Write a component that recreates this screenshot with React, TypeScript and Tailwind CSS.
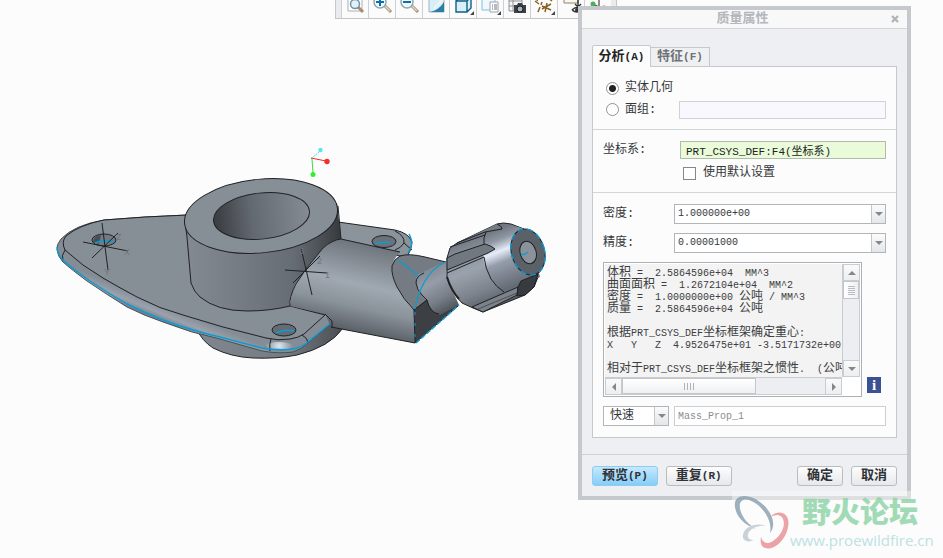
import { Fragment, useState } from "react";
import type { ReactNode } from "react";

const CJK = /([\u2e80-\u9fff]+)/;

/** Terminal-style text: half-width Latin cells next to full-width Han cells. */
function Cells({ children, bold = false }: { children: string; bold?: boolean }) {
  return (
    <>
      {children.split(CJK).map((run, i) =>
        CJK.test(run) ? (
          <span key={i} className={bold ? "text-[13px]" : "text-[12px]"}>
            {run}
          </span>
        ) : (
          <span key={i} className={bold ? "text-[11px]" : "text-[10px] leading-[10px]"}>
            {run}
          </span>
        ),
      )}
    </>
  );
}

function Triangle({ dir }: { dir: "up" | "down" | "left" | "right" }) {
  const points = {
    up: "0,6 4,2 8,6",
    down: "0,2 8,2 4,6",
    left: "6,0 6,8 2,4",
    right: "2,0 2,8 6,4",
  }[dir];
  return (
    <svg width="8" height="8" viewBox="0 0 8 8" aria-hidden="true">
      <polygon points={points} fill="#85888b" />
    </svg>
  );
}

function Combo({
  id,
  label,
  options,
  className = "",
  textClass,
}: {
  id: string;
  label: string;
  options: string[];
  className?: string;
  textClass: string;
}) {
  return (
    <div className={`grid border border-[#b3b6b9] bg-white ${className}`}>
      <select
        id={id}
        aria-label={label}
        className={`col-start-1 row-start-1 h-[18px] w-full appearance-none bg-transparent leading-[18px] outline-none ${textClass}`}
      >
        {options.map((o) => (
          <option key={o}>{o}</option>
        ))}
      </select>
      <span className="pointer-events-none col-start-1 row-start-1 flex w-[14px] items-center justify-center justify-self-end border-l border-[#c3c7ca] bg-linear-to-b from-[#fbfbfb] to-[#e4e6e9]">
        <Triangle dir="down" />
      </span>
    </div>
  );
}

function Magnifier({ sign }: { sign: "+" | "-" }) {
  return (
    <>
      <path d="M13 12l7 7" stroke="#a98c6a" strokeWidth="3" />
      <path d="M13 12l6 6" stroke="#d5dade" strokeWidth="1.4" />
      <circle cx="9" cy="9" r="6" fill="#eef8fd" stroke="#8fa3af" strokeWidth="1.4" />
      <path d={sign === "+" ? "M9 5v8M5 9h8" : "M5 9h8"} stroke="#0d6fa5" strokeWidth="2" />
    </>
  );
}

const More = () => <path d="M22 18v4h-4z" fill="#444" />;

const tools: { name: string; art: ReactNode }[] = [
  {
    name: "重新调整",
    art: (
      <>
        <path d="M4 3h14v15H4z" fill="#fff" stroke="#a5b1b9" />
        <path d="M14 14l5 5" stroke="#a98c6a" strokeWidth="3" />
        <circle cx="11" cy="11" r="4.500" fill="#dff1fb" stroke="#78909f" strokeWidth="1.500" />
      </>
    ),
  },
  { name: "放大", art: <Magnifier sign="+" /> },
  { name: "缩小", art: <Magnifier sign="-" /> },
  {
    name: "重画",
    art: (
      <>
        <path d="M4 4h15v15H4z" fill="#d8effa" stroke="#9db3bf" />
        <path d="M5 19Q14 17 19 9v10z" fill="#2b7fa3" />
        <path d="M9 16L18 6" stroke="#eef4f6" strokeWidth="2.500" />
      </>
    ),
  },
  {
    name: "显示样式",
    art: (
      <>
        <path d="M4 8h11v11H4zM4 8l4-4h11v11l-4 4M15 8l4-4" fill="#d8eff9" stroke="#125f83" strokeWidth="1.400" />
        <More />
      </>
    ),
  },
  {
    name: "已保存方向",
    art: (
      <>
        <path d="M3 3h13v14H3z" fill="#eef8fd" stroke="#7fc2df" />
        <path d="M11 9h8v10h-8z" fill="#fff" stroke="#9aa3a9" />
        <path d="M13 12h1M15 12h3M13 14h1M15 14h3M13 16h1M15 16h3" stroke="#6c777e" />
        <More />
      </>
    ),
  },
  {
    name: "视图管理器",
    art: (
      <>
        <path d="M3 3h13v15H3zM3 8h13M3 13h13M7 3v15" fill="#f5f5f5" stroke="#8f9498" />
        <path d="M8 12h3l1-2h4l1 2h3v8H8z" fill="#3d4145" />
        <circle cx="14" cy="16" r="3" fill="#a9b3ba" stroke="#17191b" />
      </>
    ),
  },
  {
    name: "基准显示",
    art: (
      <>
        <path
          d="M2 8l4 3M5 5l-1 3M5 19l2-5M8 12l1-3M14 10l-2 9M9 13l9 4M18 11l-9 5M14 4l5 4"
          stroke="#876322"
          strokeWidth="1.500"
        />
        <More />
      </>
    ),
  },
  {
    name: "注释显示",
    art: (
      <>
        <path d="M4 3h14v7H4z" fill="#fff6e9" stroke="#8b8378" />
        <path d="M18 5v9M15 11l3 3l3-3M12 17q5-5 9 0q-4 4-9 0" fill="#fff" stroke="#333" strokeWidth="1.400" />
        <circle cx="17" cy="17" r="2" fill="#333" />
      </>
    ),
  },
  {
    name: "旋转中心",
    art: (
      <>
        <path d="M6 11l6 3l7 2M12 14V4" stroke="#454545" strokeWidth="1.200" fill="none" />
        <circle cx="6" cy="11" r="2.500" fill="#4fae56" />
        <circle cx="17" cy="15" r="2.500" fill="#df493c" />
      </>
    ),
  },
];

function Toolbar() {
  return (
    <header className="flex h-[19px] shrink-0 items-end overflow-hidden pl-[335px]">
      <div
        role="toolbar"
        aria-label="图形"
        className="flex h-[30px] shrink-0 border border-[#c4c8ce] bg-[#e9ebef] px-[5px]"
      >
        {tools.map((t) => (
          <button
            key={t.name}
            aria-label={t.name}
            className="flex w-[27px] items-end justify-center border-l border-[#cdd0d5] bg-[#fbfbfc] pb-[3px]"
          >
            <svg width="22" height="22" viewBox="0 0 22 22" fill="none" aria-hidden="true">
              {t.art}
            </svg>
          </button>
        ))}
      </div>
    </header>
  );
}

function Model() {
  const ink = "#202226";
  const blue = "#0c9bd3";
  return (
    <svg
      role="img"
      aria-label="三维零件"
      width="500"
      height="225"
      viewBox="50 140 500 225"
      fill="none"
      strokeLinejoin="round"
    >
      <defs>
        <linearGradient id="wall" x1="185" x2="341" y1="0" y2="0" gradientUnits="userSpaceOnUse">
          <stop offset="0" stopColor="#838a92" />
          <stop offset="0.350" stopColor="#757c84" />
          <stop offset="0.700" stopColor="#666c73" />
          <stop offset="0.880" stopColor="#4b4f54" />
          <stop offset="1" stopColor="#36393d" />
        </linearGradient>
        <linearGradient id="bore" x1="213" x2="310" y1="0" y2="0" gradientUnits="userSpaceOnUse">
          <stop offset="0" stopColor="#383b3f" />
          <stop offset="0.400" stopColor="#636970" />
          <stop offset="1" stopColor="#858c94" />
        </linearGradient>
        <linearGradient id="arm" x1="370" x2="350" y1="245" y2="333" gradientUnits="userSpaceOnUse">
          <stop offset="0" stopColor="#6e757d" />
          <stop offset="0.450" stopColor="#a0a8b1" />
          <stop offset="0.700" stopColor="#8a929a" />
          <stop offset="1" stopColor="#555b61" />
        </linearGradient>
        <linearGradient id="rim" x1="140" x2="133" y1="295" y2="312" gradientUnits="userSpaceOnUse">
          <stop offset="0" stopColor="#848c95" />
          <stop offset="0.500" stopColor="#9aa2ae" />
          <stop offset="1" stopColor="#6a7078" />
        </linearGradient>
        <linearGradient id="neck" x1="425" x2="450" y1="266" y2="312" gradientUnits="userSpaceOnUse">
          <stop offset="0" stopColor="#7b828b" />
          <stop offset="0.350" stopColor="#969daa" />
          <stop offset="0.700" stopColor="#777e87" />
          <stop offset="1" stopColor="#4d5258" />
        </linearGradient>
        <linearGradient id="knob" x1="478" x2="506" y1="230" y2="303" gradientUnits="userSpaceOnUse">
          <stop offset="0" stopColor="#6a7077" />
          <stop offset="0.250" stopColor="#8c949e" />
          <stop offset="0.450" stopColor="#9aa2ad" />
          <stop offset="0.750" stopColor="#7c838c" />
          <stop offset="1" stopColor="#555a60" />
        </linearGradient>
        <linearGradient id="cone" x1="498" x2="524" y1="226" y2="292" gradientUnits="userSpaceOnUse">
          <stop offset="0" stopColor="#6a7077" />
          <stop offset="0.180" stopColor="#8e96a3" />
          <stop offset="0.340" stopColor="#e6edf8" />
          <stop offset="0.500" stopColor="#949cab" />
          <stop offset="1" stopColor="#555a61" />
        </linearGradient>
        <linearGradient id="base" x1="198" x2="343" y1="0" y2="0" gradientUnits="userSpaceOnUse">
          <stop offset="0" stopColor="#7f868e" />
          <stop offset="0.600" stopColor="#757c84" />
          <stop offset="1" stopColor="#4a4e53" />
        </linearGradient>
        <radialGradient id="shine" cx="279" cy="346" r="14" gradientUnits="userSpaceOnUse">
          <stop offset="0" stopColor="#dfe5ef" />
          <stop offset="1" stopColor="#dfe5ef" stopOpacity="0" />
        </radialGradient>
      </defs>

      {/* base disc */}
      <path d="M196 328Q202 341 213 348Q231 357 253 358Q277 359 297 355Q330 347 343 328L320 310Z" fill="url(#base)" stroke={ink} />

      {/* right ear */}
      <path d="M338 222L395 230Q409 233 412 242Q412 249 407 257L338 246Z" fill="#8b939b" stroke={ink} />
      <path d="M395 231Q405 236 404 243Q401 248 395 250M404 243L412 250" stroke={ink} />
      <path d="M409 234Q413 241 411 247L408 253" stroke={blue} strokeWidth="1.500" />
      <ellipse cx="384" cy="241.500" rx="12" ry="6" fill="#6c7279" stroke={ink} />
      <path d="M375 244Q382 241 391 243" stroke={blue} strokeWidth="1.500" />

      {/* flange */}
      <path
        d="M187 215L145 217L104 220Q74 225 61 239Q56 245 57 250Q58 257 63 262Q72 270 87 281Q106 294 127 307Q145 316 163 322Q191 333 220 339L262 351Q279 354 293 352Q302 349 308 343L332 323Q333 317 325 314L290 306Z"
        fill="url(#rim)"
        stroke="#4b5056"
      />
      <path
        d="M187 215L145 217L104 220Q79 225 66 236Q61 242 65 250Q82 266 103 278Q120 288 137 297Q160 309 183 315L223 327L266 338Q278 341 290 339Q298 338 304 334L325 315L290 306L250 240Z"
        fill="#868e96"
      />
      <path
        d="M187 215L145 217L104 220Q79 225 66 236Q61 242 65 250Q82 266 103 278Q120 288 137 297Q160 309 183 315L223 327L266 338Q278 341 290 339Q298 338 304 334L325 315L290 306"
        stroke={ink}
      />
      <ellipse cx="279" cy="346" rx="14" ry="4" fill="url(#shine)" />
      <path d="M271 339Q269 344 270 351M302 335Q308 338 308 343M65 250Q61 255 63 261" stroke={ink} />
      <path
        d="M57 247Q58 256 64 261Q76 271 90 281Q108 293 127 304Q145 313 163 320Q190 330 220 337L262 348Q280 351 293 349Q302 347 308 342L332 322"
        stroke={blue}
        strokeWidth="1.400"
      />
      <ellipse cx="104" cy="240" rx="12" ry="6" fill="#747b83" stroke={ink} />
      <path d="M93 242Q93 236 101 235L99 244Z" fill="#4a4f55" />
      <path d="M95 243Q104 239 114 242" stroke={blue} strokeWidth="1.500" />
      <ellipse cx="284" cy="330" rx="12" ry="6" fill="#656b72" stroke={ink} />
      <path d="M276 333Q284 329 294 331" stroke={blue} strokeWidth="1.500" />

      {/* arm */}
      <path
        d="M341 239L400 252Q394 258 392 266Q391 276 397 287Q404 301 414 310L415 343L331 327L325 314L290 306L292 292L305 269L323 248L332 241Z"
        fill="url(#arm)"
      />
      <path d="M341 239L400 252M415 343L331 327M325 314L332 321V328" stroke={ink} />

      {/* boss */}
      <path
        d="M184 220L187 237L191 283Q194 292 200 297Q217 311 247 311Q270 311 290 306Q289 297 296 284L306 269L323 248Q332 240 341 239L337 203Z"
        fill="url(#wall)"
      />
      <path
        d="M185 222L187 237L191 283Q194 292 200 297Q217 311 247 311Q270 311 290 306Q289 297 296 284L306 269L323 248Q332 240 341 239L338 206"
        stroke={ink}
      />
      <ellipse cx="261" cy="216" rx="76.800" ry="36.800" transform="rotate(-5.600 261 216)" fill="#868e96" stroke={ink} />
      <ellipse cx="261.500" cy="216" rx="48.200" ry="23" transform="rotate(-6 261.500 216)" fill="url(#bore)" stroke={ink} />

      {/* notch at the arm end */}
      <path
        d="M400 256Q409 253 425 257L446 262L418 275L427 300L414 310Q403 299 397 287Q391 275 392 266Q394 259 400 256Z"
        fill="#747b82"
      />
      <path d="M446 262L425 257Q409 253 400 256Q394 259 392 266Q391 275 397 287Q403 299 414 310L427 300" stroke={ink} />
      <path d="M427 300L414 310L415 343L458 306L450 298Z" fill="#3c3f43" stroke={ink} />
      <path
        d="M418 275Q431 267 446 262L447 277L453 292L459 305L440 315Q430 313 427 300Q417 292 416 282Q416 276 418 275Z"
        fill="url(#neck)"
      />
      <path d="M424 273Q416 276 416 283Q417 290 422 295L427 300Q430 313 439 314" stroke={ink} />
      <path d="M398 260L419 276M415 309Q417 295 425 281Q433 267 446 262" stroke={blue} strokeWidth="1.300" />
      <path d="M415 312V341" stroke={blue} strokeDasharray="3 8" />
      <path d="M416 343L459 305" stroke={blue} strokeWidth="1.500" strokeDasharray="5 2" />

      {/* knob */}
      <path
        d="M447 258L450 248L457 243L497 224Q503 222 511 224L524 229Q545 252 538 277L534 287L525 295L483 312L473 308L462 303Q450 291 447 277Z"
        fill="url(#knob)"
        stroke={ink}
      />
      <path
        d="M484 233L497 227Q514 222 528 232L540 277L503 292Q489 280 484 263Q482 248 484 233Z"
        fill="url(#cone)"
      />
      <path d="M447 258L455 254L485 244Q492 246 495 249L488 253L447 270Z" fill="#717880" stroke={ink} />
      <path d="M457 243L485 232L502 229Q502 226 497 224" fill="#747b83" stroke={ink} />
      <path d="M447 273L484 257Q485 268 491 279Q496 287 504 292M486 232Q483 238 484 244M450 247L485 235" stroke={ink} />
      <path d="M447 277Q451 290 459 299" stroke={ink} strokeWidth="2" />
      <path d="M472 307L518 287L517 295L483 312Z" fill="#7b828a" stroke={ink} />
      <path d="M478 309L517 293" stroke="#4b5056" />
      <path d="M518 287L521 281L538 274L534 287L525 295L517 296Z" fill="#373a3e" stroke={ink} />
      <ellipse cx="528" cy="252" rx="16.500" ry="23.500" transform="rotate(-16 528 252)" fill="#5b6168" stroke={ink} />
      <ellipse
        cx="528"
        cy="252"
        rx="16.500"
        ry="23.500"
        transform="rotate(-16 528 252)"
        stroke={blue}
        strokeWidth="1.400"
        strokeDasharray="6 4"
      />
      <ellipse cx="528" cy="252.500" rx="8" ry="11.500" transform="rotate(-16 528 252)" fill="#8b929a" stroke={ink} />
      <path d="M521 255L525 254L528 252" stroke={blue} strokeWidth="1.300" />

      {/* coordinate systems */}
      <path d="M102 223L108 270M83 242L128 251M92 258L118 233M301 248L312 295M285 270L327 273M293 283L320 256" stroke={ink} />
      <g fill="#71767b" fontFamily="Liberation Sans, sans-serif" fontSize="9">
        <text x="116" y="240">Z</text>
        <text x="124" y="255">X</text>
        <text x="104" y="275">Y</text>
        <text x="299" y="254">3</text>
        <text x="317" y="264">2</text>
        <text x="325" y="278">1</text>
      </g>

      {/* view triad */}
      <path d="M311 159L320 151" stroke="#35d5e8" strokeDasharray="2 1" />
      <path d="M311 158L326 161" stroke="#ef2b2b" />
      <path d="M312 159L313 173" stroke="#30e330" />
      <circle cx="320.500" cy="150" r="2.200" fill="#55e6f5" />
      <circle cx="327" cy="161.500" r="2.700" fill="#f22f2f" />
      <circle cx="313" cy="174.500" r="2.500" fill="#30ee30" />
    </svg>
  );
}

const results = [
  "体积 =  2.5864596e+04  MM^3",
  "曲面面积 =  1.2672104e+04  MM^2",
  "密度 =  1.0000000e+00 公吨 / MM^3",
  "质量 =  2.5864596e+04 公吨",
  "",
  "根据PRT_CSYS_DEF坐标框架确定重心:",
  "X   Y   Z  4.9526475e+01 -3.5171732e+00",
  "",
  "相对于PRT_CSYS_DEF坐标框架之惯性.  (公吨",
];

const scrollButton =
  "flex size-[17px] shrink-0 items-center justify-center border border-[#c9ccd0] bg-linear-to-b from-[#fafafa] to-[#eceef0]";

function Results() {
  return (
    <div className="grid h-[135px] w-[259px] grid-cols-[minmax(0,1fr)_18px] grid-rows-[minmax(0,1fr)_18px] border border-[#aeb1b4] bg-white p-px">
      <pre className="overflow-hidden bg-[#f3f3f3] pt-[3px] pl-[2px] font-[Liberation_Mono,Noto_Sans_CJK_SC,monospace] text-[12px] leading-[12px] text-[#3b3d40]">
        {results.map((line, i) => (
          <Fragment key={i}>
            <Cells>{line}</Cells>
            {"\n"}
          </Fragment>
        ))}
      </pre>
      <div className="flex flex-col border-x border-[#c9ccd0] bg-[#eceef1]">
        <button aria-label="向上滚动" className={scrollButton}>
          <Triangle dir="up" />
        </button>
        <div className="flex h-[18px] flex-col items-center justify-center gap-px border border-[#c4c7ca] bg-linear-to-r from-white to-[#f0f0f0]">
          {[0, 1, 2, 3, 4].map((n) => (
            <i key={n} className="h-px w-[7px] bg-[#b9bcbf]" />
          ))}
        </div>
        <button aria-label="向下滚动" className={`mt-auto ${scrollButton}`}>
          <Triangle dir="down" />
        </button>
      </div>
      <div className="flex border-y border-[#c9ccd0] bg-[#eceef1]">
        <button aria-label="向左滚动" className={scrollButton}>
          <Triangle dir="left" />
        </button>
        <div className="flex w-[134px] items-center justify-center gap-[2px] border border-[#c4c7ca] bg-linear-to-b from-white to-[#f0f0f0]">
          {[0, 1, 2, 3].map((n) => (
            <i key={n} className="h-[7px] w-px bg-[#b0b3b6]" />
          ))}
        </div>
        <button aria-label="向右滚动" className={`ml-auto ${scrollButton}`}>
          <Triangle dir="right" />
        </button>
      </div>
    </div>
  );
}

function PushButton({ children, primary = false }: { children: string; primary?: boolean }) {
  return (
    <button
      className={`h-5 rounded-[3px] border px-[9px] leading-[18px] font-bold whitespace-nowrap text-[#2f3236] ${
        primary
          ? "border-[#8fcdf0] bg-linear-to-b from-[#c5e9fd] to-[#84cdf8]"
          : "border-[#b9bcc0] bg-linear-to-b from-[#fdfdfd] to-[#e6e8ea]"
      }`}
    >
      <Cells bold>{children}</Cells>
    </button>
  );
}

function Dialog() {
  const [target, setTarget] = useState("solid");
  const radio =
    "size-[13px] shrink-0 appearance-none rounded-full border border-[#8f9296] bg-white checked:bg-[radial-gradient(circle,#222_0_3px,#fff_4px)]";
  return (
    <section
      role="dialog"
      aria-labelledby="dialog-title"
      className="absolute top-[6px] right-8 w-[333px] border-4 border-[#c5c9cd] bg-[#edeff2]"
    >
      <div className="flex h-[19px] items-center border-b border-[#d3d6d9] bg-[#f8f8f9] px-[6px]">
        <h1 id="dialog-title" className="flex-1 pl-2 text-center text-[13px] leading-[18px] font-bold text-[#b4b7ba]">
          质量属性
        </h1>
        <button aria-label="关闭" className="flex size-3 items-center justify-center">
          <svg width="8" height="8" viewBox="0 0 8 8" aria-hidden="true">
            <path d="M1 1l6 6M7 1l-6 6" stroke="#b2b5b8" strokeWidth="2.400" />
          </svg>
        </button>
      </div>

      <div className="px-[10px] pt-4 pb-4">
        <div role="tablist" className="flex items-end font-bold">
          <button
            role="tab"
            aria-selected="true"
            className="z-10 -mb-px h-[22px] w-[59px] rounded-t-[2px] border border-b-0 border-[#c5c9cd] bg-[#fcfcfc] leading-5 whitespace-nowrap text-[#222]"
          >
            <Cells bold>分析(A)</Cells>
          </button>
          <button
            role="tab"
            aria-selected="false"
            className="h-[19px] w-[59px] border-t border-r border-[#c5c9cd] bg-[#eff0f2] leading-[18px] whitespace-nowrap text-[#707377]"
          >
            <Cells bold>特征(F)</Cells>
          </button>
        </div>

        <div role="tabpanel" className="border border-[#c5c9cd] bg-[#fcfcfc]">
          <div className="flex flex-col gap-px border-b border-[#d3d6d9] px-[10px] pt-[11px] pb-[9px]">
            <label className="flex h-5 items-center gap-[6px] pl-[3px]">
              <input
                type="radio"
                name="target"
                checked={target === "solid"}
                onChange={() => setTarget("solid")}
                className={radio}
              />
              实体几何
            </label>
            <div className="flex h-[21px] items-center pl-[3px]">
              <label className="flex w-[73px] items-center gap-[6px]">
                <input
                  type="radio"
                  name="target"
                  checked={target === "quilt"}
                  onChange={() => setTarget("quilt")}
                  className={radio}
                />
                <span>面组:</span>
              </label>
              <input aria-label="面组" className="h-[18px] min-w-0 flex-1 border border-[#d0d2d4] bg-[#f9f8fe]" />
            </div>
          </div>

          <div className="flex flex-col gap-[7px] border-b border-[#d3d6d9] px-[10px] pt-[11px] pb-3">
            <div className="flex items-center">
              <label htmlFor="csys" className="w-[77px]">
                坐标系:
              </label>
              <input
                id="csys"
                defaultValue="PRT_CSYS_DEF:F4(坐标系)"
                className="h-[18px] min-w-0 flex-1 border border-[#b3b9ae] bg-[#eafbda] px-[5px] font-[Liberation_Mono,Noto_Sans_CJK_SC,monospace] text-[11px] text-[#222]"
              />
            </div>
            <label className="flex items-center gap-[7px] pl-20 leading-[14px]">
              <input type="checkbox" className="size-[13px] appearance-none border border-[#85888b] bg-white" />
              使用默认设置
            </label>
          </div>

          <div className="flex flex-col gap-[9px] px-[10px] pt-[11px] pb-[11px]">
            <div className="flex items-center">
              <label htmlFor="density" className="w-[71px]">
                密度:
              </label>
              <Combo
                id="density"
                label="密度"
                options={["1.000000e+00"]}
                className="flex-1"
                textClass="pl-[3px] text-[10px] font-[Liberation_Mono,monospace]"
              />
            </div>
            <div className="flex items-center">
              <label htmlFor="accuracy" className="w-[71px]">
                精度:
              </label>
              <Combo
                id="accuracy"
                label="精度"
                options={["0.00001000", "0.00010000"]}
                className="flex-1"
                textClass="pl-[3px] text-[10px] font-[Liberation_Mono,monospace]"
              />
            </div>
            <div className="flex items-end gap-[5px]">
              <Results />
              <button
                aria-label="信息"
                className="mb-1 h-4 w-[14px] bg-[#3b5193] font-[Liberation_Serif,serif] text-[15px] leading-4 font-bold text-white"
              >
                i
              </button>
            </div>
            <div className="flex gap-[5px]">
              <Combo
                id="mode"
                label="分析类型"
                options={["快速", "已保存", "特征"]}
                className="w-[66px]"
                textClass="pl-[6px] text-[12px]"
              />
              <input
                aria-label="名称"
                defaultValue="Mass_Prop_1"
                className="h-5 min-w-0 flex-1 border border-[#cccfd2] bg-white px-[3px] font-[Liberation_Mono,monospace] text-[10px] text-[#8b8d90]"
              />
            </div>
          </div>
        </div>
      </div>

      <footer className="flex gap-2 border-t border-[#cfd2d5] px-[10px] pt-[11px] pb-[10px]">
        <PushButton primary>预览(P)</PushButton>
        <PushButton>重复(R)</PushButton>
        <span className="flex-1" />
        <PushButton>确定</PushButton>
        <PushButton>取消</PushButton>
      </footer>
    </section>
  );
}

function Watermark() {
  return (
    <div className="absolute right-[5px] bottom-[3px] z-20 flex h-16 w-[206px] bg-[#fcfcfc]/50 opacity-90">
      <svg width="58" height="64" viewBox="0 0 58 64" fill="none" className="shrink-0" aria-hidden="true">
        <path
          fillRule="evenodd"
          d="M3 16C1 3 16 2 28 11C40 20 45 34 38 42C40 32 35 22 26 14C16 6 6 6 8 18C10 27 17 34 24 38C12 34 4 25 3 16Z"
          fill="#94a8b7"
        />
        <path
          d="M38 26C47 17 59 22 56 36C54 49 42 60 33 57C29 56 28 51 29 46C31 52 35 54 41 50C49 45 54 35 51 28C48 22 43 24 38 26Z"
          fill="#ea9a9e"
        />
        <path
          d="M34 35C26 31 12 35 11 44C10 50 16 52 22 49C17 49 14 46 17 41C21 36 28 34 34 35Z"
          fill="#c3cfd6"
        />
      </svg>
      <div className="flex flex-col whitespace-nowrap">
        <strong className="pl-3 font-[Noto_Sans_CJK_SC,sans-serif] text-[29px] leading-[38px] font-black text-[#97d8ae]">
          野火论坛
        </strong>
        <span className="font-[Open_Sans,sans-serif] text-[15px] leading-[22px] text-[#b6dfe2]">www.proewildfire.cn</span>
      </div>
    </div>
  );
}

export default function App() {
  return (
    <div className="relative flex min-h-screen flex-col overflow-hidden bg-[#fcfcfc] font-[Liberation_Mono,Noto_Sans_CJK_SC,monospace] text-[12px] leading-4 text-[#35373a]">
      <Toolbar />
      <main className="pt-[121px] pl-[50px]">
        <Model />
      </main>
      <Dialog />
      <Watermark />
    </div>
  );
}
